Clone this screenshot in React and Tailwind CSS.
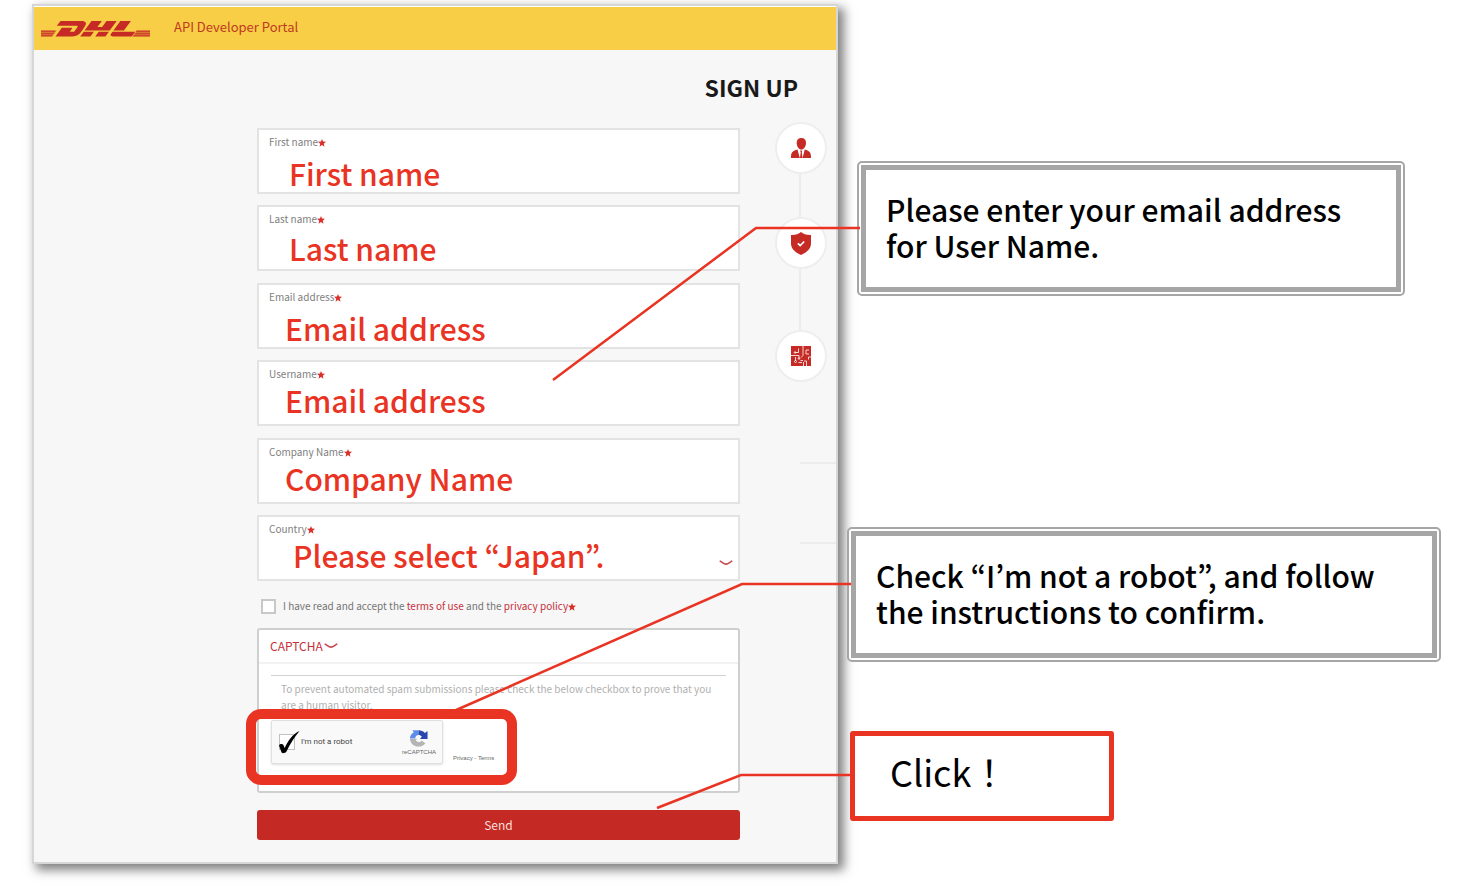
const fields = [
  { id: 'first-name', label: 'First name', value: 'First name', inset: 'pl-[30px] pt-[2px]' },
  { id: 'last-name', label: 'Last name', value: 'Last name', inset: 'pl-[30px]' },
  { id: 'email', label: 'Email address', value: 'Email address', inset: 'pl-[26px] pt-[2px]' },
  { id: 'username', label: 'Username', value: 'Email address', inset: 'pl-[26px] -mt-[3px]' },
  { id: 'company', label: 'Company Name', value: 'Company Name', inset: 'pl-[26px] -mt-[3px]' },
]

const leaders = [
  '553,380 756,228 860,228',
  '454,711 742,584 851,584',
  '657,808 741,775 851,775',
]

function Logo() {
  return (
    <svg viewBox="0 0 109 16" className="h-4 w-[109px]" fill="#c52a24" role="img" aria-label="DHL">
      <path d="M0 9.600h15.500l-4 5.800H0zM109 9.600H96l-4 5.800h17z" opacity=".55" />
      <path d="M0 9.600h14.500l-1 1.400H0zM0 11.900h12.800l-.9 1.300H0zM0 14.100h11.200l-.7 1.300H0z" opacity=".6" />
      <path d="M109 9.600H95.400l-1 1.400H109zM109 11.900H93.700l-.9 1.300H109zM109 14.100H92.100l-.7 1.300H109z" opacity=".6" />
      <path d="M19.600 0h21c4.500 0 5.200 2.400 3.500 4.900-1.500 2.200-3 5.200-5.600 7.800-2 2-4.600 2.700-7.400 2.700H14.500l6.300-8.700h9.500c1.500 0 .7 1-.2 2.200l-1.300 1.800h4.300l3.100-4.300c.8-1.300.5-1.700-1.100-1.700H15.800z" />
      <path d="M50.500 0h10.300l-4.400 6.100h4.700L65.500 0h10.200l-7 9.600H43.500zM42.700 10.700h10.200l-3.500 4.700H39.200zM57.700 10.700h10.200l-3.500 4.700H54.200z" />
      <path d="M79.400 0h10.500l-7 9.600H72.400zM71.600 10.700h22.700l-3.500 4.700H73.200c-3.500 0-4.400-1.300-3-3z" />
    </svg>
  )
}

function Star() {
  return (
    <svg viewBox="0 0 10 10" className="inline-block size-2 align-[-1px]" fill="#d9302a" aria-hidden="true">
      <path d="M5 0l1.300 3.200 3.700.2-2.800 2.400.9 3.800L5 7.500 1.900 9.600l.9-3.800L0 3.400l3.700-.2z" />
    </svg>
  )
}

function Chevron() {
  return (
    <svg viewBox="0 0 14 6" className="h-1.5 w-3.5" fill="none" stroke="#c94a50" strokeWidth="1.6" strokeLinecap="round" aria-hidden="true">
      <path d="M1.300 1.200c1.600.7 3.400 2.900 5.700 2.900s4.100-2.200 5.700-2.900" />
    </svg>
  )
}

function PersonIcon() {
  return (
    <svg viewBox="0 0 20 20" className="size-5" fill="#c52a24" aria-hidden="true">
      <path d="M10.300 0c3 0 4.700 1.800 4.700 4.800 0 3.400-2 6.800-4.700 6.800S5.700 8.200 5.700 4.800C5.700 1.800 7.400 0 10.300 0z" />
      <path d="M0 20c0-5.500 1-7 6.500-8.500L8.800 20zM20 20c0-5.500-1-7-6.300-8.500L11.600 20zM9.100 12.500h2.200l-.5 1.700.7 5.800H9l.7-5.800z" />
    </svg>
  )
}

function ShieldIcon() {
  return (
    <svg viewBox="0 0 20 23" className="h-[23px] w-5" aria-hidden="true">
      <path d="M10 0c2.500 2.200 5.500 3.200 10 3v8.500c0 5-3.500 8.500-10 11.500C3.500 20 0 16.500 0 11.500V3c4.500.2 7.500-.8 10-3z" fill="#c52a24" />
      <path d="M6.800 11.300l2.400 2.200 4-4" fill="none" stroke="#fff" strokeWidth="1.7" />
    </svg>
  )
}

function CircuitIcon() {
  return (
    <svg viewBox="0 0 20 20" className="size-5" aria-hidden="true">
      <path d="M0 0h20v20H0z" fill="#c52a24" />
      <g fill="none" stroke="#fff" strokeOpacity=".8" strokeWidth="1">
        <path d="M4 6.500h3.500V2.500M0 9.500h8v3M9.500 14.500h2.500M12 0v9.500l-2 2M4.500 11v4M7.500 16.500H11M12.500 16v4M15.500 20v-5h-2.500M20 11h-2.500v2.500M18 4h-3v4h3" />
        <circle cx="4" cy="6.500" r=".8" />
        <circle cx="4.500" cy="15.500" r="1" />
        <circle cx="8" cy="12.500" r=".8" />
      </g>
    </svg>
  )
}

function RecaptchaIcon() {
  return (
    <svg viewBox="0 0 20 20" className="size-[19px]" aria-hidden="true">
      <path d="M10 1.200H3.500L5 3.500C2.500 5 1 7.500 1 10h5.500c0-2 1.500-3.500 3.500-3.700z" fill="#5b8ee8" />
      <path d="M10 1.200c2.700 0 5 .9 6.800 2.900L19.500 2v8.500H11.500l2-2.300C12.800 6.800 11.500 6.300 10 6.300z" fill="#2846ad" />
      <path d="M1 10.300c.3 5 4 8.200 9 8.200 3 0 5.500-1.200 7.200-3.300l-3.700-3.200c-2 2.500-5.300 2-6.500-.5l2-1.200z" fill="#b5b5b5" />
    </svg>
  )
}

function Step({ children }) {
  return (
    <li className="flex size-[52px] items-center justify-center rounded-full border-2 border-[#eeeeee] bg-white">
      {children}
    </li>
  )
}

function Callout({ className, children }) {
  return (
    <div className={`rounded-[5px] border-2 border-[#a6a6a6] bg-white p-[2px] ${className}`}>
      <p className="h-[127px] border-[5px] border-[#a6a6a6] pt-[21px] pl-5 text-[30px] leading-9 font-medium text-black">
        {children}
      </p>
    </div>
  )
}

function SignUpForm() {
  return (
    <form className="pt-[9px]" onSubmit={(e) => e.preventDefault()}>
      <div className="flex h-[453px] flex-col justify-between">
        {fields.map((field) => (
          <div key={field.id} className="h-[66px] border-2 border-[#e3e3e3] bg-white pt-[4px]">
            <label htmlFor={field.id} className="block h-[17px] pl-[10px] text-[10px] leading-4 text-[#808080]">
              {field.label}<Star />
            </label>
            <div className={field.inset}>
              <input
                id={field.id}
                defaultValue={field.value}
                className="block h-10 w-full bg-transparent text-[30px] leading-10 font-medium text-[#e93323] outline-none"
              />
            </div>
          </div>
        ))}
        <div className="h-[66px] border-2 border-[#e3e3e3] bg-white pt-[4px]">
          <label htmlFor="country" className="block h-[17px] pl-[10px] text-[10px] leading-4 text-[#808080]">
            Country<Star />
          </label>
          <div className="-mt-[3px] flex items-center pr-[5px] pl-[34px]">
            <select
              id="country"
              className="block h-10 w-full appearance-none bg-transparent text-[30px] leading-10 font-medium text-[#e93323] outline-none"
            >
              <option>Please select “Japan”.</option>
            </select>
            <div className="pt-4"><Chevron /></div>
          </div>
        </div>
      </div>

      <div className="mt-[17px] flex h-4 items-center gap-[7px] pl-[4px] text-[10px] leading-4 text-[#757575]">
        <input id="accept" type="checkbox" className="size-[15px] appearance-none border-2 border-[#c8c8c8] bg-white" />
        <label htmlFor="accept">
          I have read and accept the <a href="#terms" className="text-[#c5303a]">terms of use</a> and the{' '}
          <a href="#privacy" className="text-[#c5303a]">privacy policy</a><Star />
        </label>
      </div>

      <section className="mt-[14px] h-[165px] rounded-[3px] border-2 border-[#cfcfcf] bg-white">
        <button type="button" className="flex h-[34px] w-full items-center gap-px border-b-2 border-[#f2f2f2] pl-[11px] text-xs text-[#c5303a]">
          CAPTCHA <Chevron />
        </button>
        <div className="mx-3 mt-[11px] border-t border-[#d2d2d2] px-[10px] pt-[5px]">
          <p className="text-[10px] leading-4 text-[#b0b0b0]">
            To prevent automated spam submissions please check the below checkbox to prove that you are a human visitor.
          </p>
        </div>
        <div className="mt-[7px] ml-3 flex items-end gap-[10px]">
          <div className="flex h-[44px] w-[172px] items-center rounded-[2px] border border-[#e0e0e0] bg-[#f9f9f9] pr-[6px] pl-[7px] shadow-sm">
            <div className="relative size-4">
              <input id="robot" type="checkbox" defaultChecked className="block size-4 appearance-none border border-[#c1c1c1] bg-white" />
              <svg viewBox="0 0 21 23" className="pointer-events-none absolute -top-[3px] left-0 h-[23px] w-[21px]" aria-hidden="true">
                <path d="M0 14.500c1-1.800 3.600-1.900 4.400-.6l1.300 3C9 10 13.500 3 20.500 0 15.500 6 11 13 7.500 20.500c-.8 1.500-4.500 2.400-5 .8z" fill="#000" />
              </svg>
            </div>
            <label htmlFor="robot" className="pl-[6px] font-['Roboto'] text-[8px] text-[#444]">I'm not a robot</label>
            <div className="ml-auto flex flex-col items-center font-['Liberation_Sans'] text-[6px] leading-2 text-[#666]">
              <RecaptchaIcon />
              reCAPTCHA
            </div>
          </div>
          <p className="font-['Liberation_Sans'] text-[6px] leading-3 text-[#666]">
            <a href="#recaptcha-privacy">Privacy</a> - <a href="#recaptcha-terms">Terms</a>
          </p>
        </div>
      </section>

      <button type="submit" className="mt-[17px] block h-[30px] w-full rounded-[3px] bg-[#c42923] text-xs text-[#f9dedd]">
        Send
      </button>
    </form>
  )
}

function Portal() {
  return (
    <section className="border-2 border-[#d6d6d6] bg-[#f7f7f7] pb-[22px] shadow-[5px_5px_10px_1px_rgba(0,0,0,0.5)]">
      <header className="flex h-[44px] items-center gap-6 border-t border-white bg-[#f8ce46] pl-[7px]">
        <Logo />
        <span className="pb-[3px] text-[13px] text-[#c03a22]">API Developer Portal</span>
      </header>
      <h1 className="pt-[19px] pr-[38px] text-right text-[23px] leading-9 font-bold text-[#191919]">SIGN UP</h1>
      <div className="grid grid-cols-[223fr_483fr_96fr] pt-[14px]">
        <div className="col-start-2"><SignUpForm /></div>
        <div className="pt-[3px]">
          <ol className="flex flex-col items-end pr-[9px]">
            <Step><PersonIcon /></Step>
            <li className="mr-[26px] h-[43px] w-0.5 bg-[#ececec]" />
            <Step><ShieldIcon /></Step>
            <li className="mr-[26px] h-[61px] w-0.5 bg-[#ececec]" />
            <Step><CircuitIcon /></Step>
          </ol>
          <div className="mt-20 ml-auto h-[82px] w-9 border-y-2 border-[#ececec]" />
        </div>
      </div>
    </section>
  )
}

export default function App() {
  return (
    <main className="relative grid grid-cols-[806fr_634fr] items-start bg-white pt-1 pb-[22px] pl-8 font-['Noto_Sans_CJK_JP',sans-serif]">
      <Portal />
      <aside className="relative pt-[157px]">
        <Callout className="mr-[67px] ml-[19px]">
          Please enter your email address<br />for User Name.
        </Callout>
        <Callout className="mt-[231px] mr-[31px] ml-[9px]">
          Check “I’m not a robot”, and follow<br />the instructions to confirm.
        </Callout>
        <p className="mt-[69px] ml-3 flex h-[90px] w-[264px] items-center rounded-[3px] border-[5px] border-[#e93323] bg-white pb-[10px] pl-[35px] text-4xl text-black">
          Click！
        </p>
      </aside>
      <svg
        viewBox="0 0 1472 886"
        preserveAspectRatio="none"
        className="pointer-events-none absolute top-0 left-0 h-[886px] w-full"
        fill="none"
        stroke="#e93323"
        aria-hidden="true"
      >
        {leaders.map((points) => (
          <polyline key={points} points={points} strokeWidth="2.5" />
        ))}
        <rect x="251" y="714" width="261" height="66" rx="10" strokeWidth="10" />
      </svg>
    </main>
  )
}
